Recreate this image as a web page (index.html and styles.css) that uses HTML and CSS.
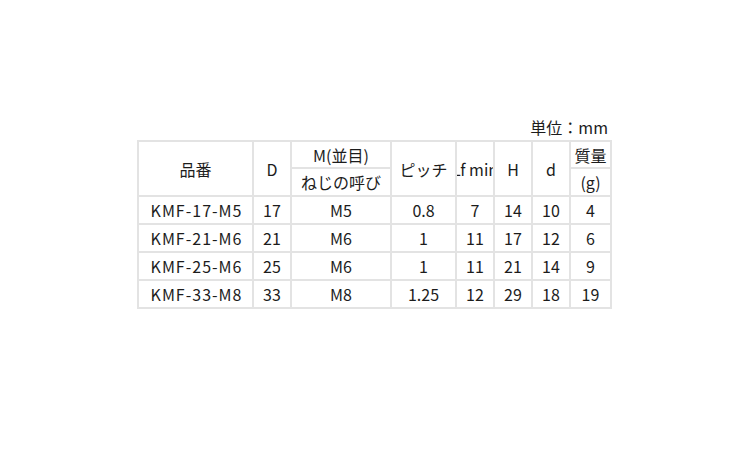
FILE: index.html
```html
<!DOCTYPE html>
<html lang="ja">
<head>
<meta charset="utf-8">
<link rel="stylesheet" href="styles.css">
</head>
<body>
<div class="wrap">
  <div class="unit">単位：mm</div>
  <table class="spec">
    <colgroup>
      <col class="c1"><col class="c2"><col class="c3"><col class="c4"><col class="c5"><col class="c6"><col class="c7"><col class="c8">
    </colgroup>
    <thead>
      <tr class="h1">
        <th rowspan="2">品番</th>
        <th rowspan="2">D</th>
        <th>M(並目)</th>
        <th rowspan="2">ピッチ</th>
        <th rowspan="2"><span class="clip">Lf min</span></th>
        <th rowspan="2">H</th>
        <th rowspan="2">d</th>
        <th>質量</th>
      </tr>
      <tr class="h2">
        <th>ねじの呼び</th>
        <th>(g)</th>
      </tr>
    </thead>
    <tbody>
      <tr><td class="pn">KMF-17-M5</td><td>17</td><td>M5</td><td>0.8</td><td>7</td><td>14</td><td>10</td><td>4</td></tr>
      <tr><td class="pn">KMF-21-M6</td><td>21</td><td>M6</td><td>1</td><td>11</td><td>17</td><td>12</td><td>6</td></tr>
      <tr><td class="pn">KMF-25-M6</td><td>25</td><td>M6</td><td>1</td><td>11</td><td>21</td><td>14</td><td>9</td></tr>
      <tr><td class="pn">KMF-33-M8</td><td>33</td><td>M8</td><td>1.25</td><td>12</td><td>29</td><td>18</td><td>19</td></tr>
    </tbody>
  </table>
</div>
</body>
</html>
```

FILE: styles.css
```css
html, body {
  margin: 0;
  padding: 0;
  background: #ffffff;
}
body {
  font-family: "Noto Sans CJK JP", "Noto Sans", sans-serif;
  font-size: 16px;
  color: #1c1c1c;
}
.wrap {
  width: 475px;
  margin: 115px 0 0 137px;
}
.unit {
  text-align: right;
  padding-right: 4px;
  height: 25px;
  line-height: 25px;
}
.spec {
  width: 475px;
  table-layout: fixed;
  border-collapse: separate;
  border-spacing: 0;
  border: 1px solid #e3e3e3;
}
.spec th, .spec td {
  border: 1px solid #e3e3e3;
  padding: 0;
  text-align: center;
  font-weight: normal;
  overflow: hidden;
  white-space: nowrap;
}
.spec td { height: 26px; }
.spec td.pn {
  letter-spacing: 1px;
  padding-left: 2px;
}
.h1 th { height: 25px; }
.h2 th { height: 26px; }
.c1 { width: 115px; }
.c2 { width: 38px; }
.c3 { width: 100px; }
.c4 { width: 65px; }
.c5 { width: 38px; }
.c6 { width: 38px; }
.c7 { width: 38px; }
.c8 { width: 41px; }
.clip {
  display: flex;
  justify-content: center;
  width: 36px;
  overflow: hidden;
  white-space: nowrap;
}
```
